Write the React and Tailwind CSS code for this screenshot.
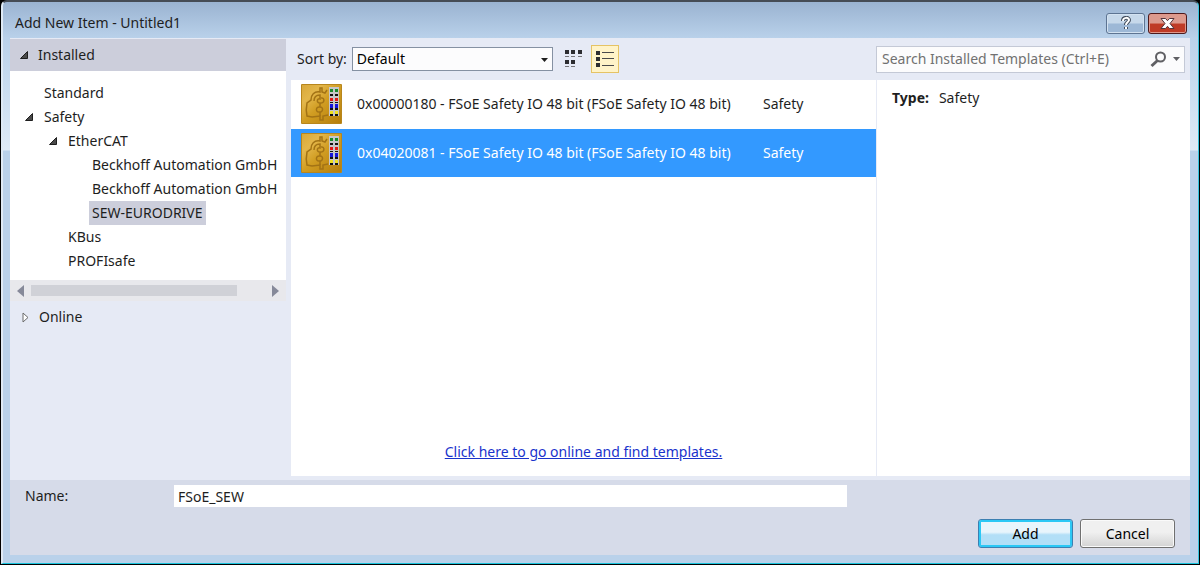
import { useState } from "react";

const tree = [
  { id: 1, name: "Standard", indent: "pl-[31px]" },
  { id: 2, name: "Safety", indent: "pl-[15px]", open: true },
  { id: 3, name: "EtherCAT", indent: "pl-[39px]", open: true },
  { id: 4, name: "Beckhoff Automation GmbH", indent: "pl-[79px]" },
  { id: 5, name: "Beckhoff Automation GmbH", indent: "pl-[79px]" },
  { id: 6, name: "SEW-EURODRIVE", indent: "pl-[79px]" },
  { id: 7, name: "KBus", indent: "pl-[55px]" },
  { id: 8, name: "PROFIsafe", indent: "pl-[55px]" },
];

const templates = [
  {
    id: "0x00000180",
    name: "0x00000180 - FSoE Safety IO 48 bit (FSoE Safety IO 48 bit)",
    type: "Safety",
  },
  {
    id: "0x04020081",
    name: "0x04020081 - FSoE Safety IO 48 bit (FSoE Safety IO 48 bit)",
    type: "Safety",
  },
];

const OpenArrow = () => (
  <svg width="9" height="9" viewBox="0 0 9 9" className="shrink-0">
    <path d="M7.5 .5v7h-7z" fill="#4a4a4a" stroke="#1e1e1e" />
  </svg>
);

const TemplateIcon = () => (
  <svg width="41" height="40" viewBox="0 0 41 40" className="shrink-0">
    <defs>
      <linearGradient id="gold" x1="0" y1="0" x2="1" y2="1">
        <stop offset="0" stopColor="#d9a93a" />
        <stop offset="0.25" stopColor="#e3b64a" />
        <stop offset="0.5" stopColor="#d19d22" />
        <stop offset="1" stopColor="#b57e0c" />
      </linearGradient>
    </defs>
    <rect width="41" height="40" rx="1" fill="#b8861c" />
    <rect x="1" y="1" width="39" height="38" fill="url(#gold)" />
    <g fill="none" stroke="#a37315" strokeWidth="1.5">
      <path d="M26 6l-2 3-3-1V4h-2v4c-6-1-9 3-9 8l-4 3c-1 5-1 9 0 13l5 1 8-1v4h3v-4l5-1" />
      <path d="M13 17c0-4 2-6 6-6v4c-3-1-4 4 0 4M19 19c5 1 5-6 1-5M19 19v4c-4-1-5 5-1 5 4 1 5-5 1-5M19 28v4" />
    </g>
    <rect x="28" y="3" width="10" height="29" fill="#c6c6ca" />
    <path d="M29 5h3v3h-3zM34 5h3v3h-3z" fill="#188a2c" />
    <path
      d="M29 10h3v2h-3zM34 10h3v2h-3zM29 18h3v1h-3zM34 18h3v1h-3zM29 24h3v2h-3zM34 24h3v2h-3zM29 30h3v2h-3zM34 30h3v2h-3z"
      fill="#111"
    />
    <path d="M29 14h3v3h-3zM34 14h3v3h-3z" fill="#e01818" />
    <path d="M29 20h3v4h-3zM34 20h3v4h-3z" fill="#1414dc" />
    <path d="M29 27h3v3h-3zM34 27h3v3h-3z" fill="#f0e020" />
  </svg>
);

const TitleBar = () => (
  <header className="flex h-[36px] items-center pr-[11px] pl-[12px]">
    <h1 className="flex-1 pt-[6px]">Add New Item - Untitled1</h1>
    <div className="flex gap-[3px] pt-[7px]">
      <button
        aria-label="Help"
        className="flex h-[21px] w-[39px] items-center justify-center rounded-[3px] border border-[#5d7492] bg-linear-to-b from-[#c6d8ea] from-45% to-[#9db8d6] to-55% shadow-[inset_0_0_0_1px_#d3e2f1]"
      >
        <svg width="12" height="15" viewBox="0 0 12 15" fill="none">
          <path
            d="M3 5c0-4 6-4 6-1 0 2-3 2-3 5M6 11v2"
            stroke="#3f4a5a"
            strokeWidth="4"
          />
          <path
            d="M3 5c0-4 6-4 6-1 0 2-3 2-3 5M6 11v2"
            stroke="#fff"
            strokeWidth="2"
          />
        </svg>
      </button>
      <button
        aria-label="Close"
        className="flex h-[21px] w-[39px] items-center justify-center rounded-[3px] border border-[#4d1a1c] bg-linear-to-b from-[#dc9a8e] from-45% to-[#bf3b26] to-55% shadow-[inset_0_0_0_1px_#e0978a]"
      >
        <svg width="15" height="13" viewBox="0 0 15 13">
          <path
            d="M1 1.5h4.5l2 2.200 2-2.200H14l-4 5 4 5H9.500l-2-2.200-2 2.200H1l4-5z"
            fill="#fff"
            stroke="#54343a"
          />
        </svg>
      </button>
    </div>
  </header>
);

const Sidebar = () => (
  <nav aria-label="Categories" className="w-[276px] shrink-0 pt-px">
    <button className="flex h-[32px] w-full items-center gap-[9px] bg-[#cccedb] pl-[10px]">
      <OpenArrow />
      Installed
    </button>
    <ul className="overflow-hidden bg-white pt-[10px] pb-[7px]">
      {tree.map((item) => (
        <li
          key={item.id}
          className={`flex h-[24px] items-center ${item.indent}`}
        >
          {item.open && <OpenArrow />}
          <button
            className={`h-full whitespace-nowrap ${
              item.open ? "pl-[10px]" : "px-[3px]"
            } ${item.name === "SEW-EURODRIVE" ? "bg-[#cccedb]" : ""}`}
          >
            {item.name}
          </button>
        </li>
      ))}
    </ul>
    <div className="flex h-[21px] items-center bg-[#e8e8ec] px-[7px]">
      <button aria-label="Scroll left">
        <svg width="7" height="12" viewBox="0 0 7 12">
          <path d="M7 0v12L0 6z" fill="#868999" />
        </svg>
      </button>
      <div className="mx-[7px] flex-1">
        <div className="h-[11px] w-[88%] bg-[#d0d1d7]" />
      </div>
      <button aria-label="Scroll right">
        <svg width="7" height="12" viewBox="0 0 7 12">
          <path d="M0 0v12l7-6z" fill="#868999" />
        </svg>
      </button>
    </div>
    <button className="flex h-[32px] w-full items-center gap-[10px] pl-[12px]">
      <svg width="7" height="11" viewBox="0 0 7 11">
        <path d="M1 1v9l5-4.5z" fill="#fff" stroke="#6a6a6a" />
      </svg>
      Online
    </button>
  </nav>
);

const App = () => {
  const [selected, setSelected] = useState("0x04020081");
  const [name, setName] = useState("FSoE_SEW");

  return (
    <div className="flex min-h-screen bg-black pr-px pb-px pl-px font-['Noto_Sans','Open_Sans',sans-serif] text-[14px] leading-[20px] text-[#1e1e1e]">
      <div className="flex flex-1 flex-col rounded-t-[6px] border-t-2 border-r border-b border-l-2 border-t-[#454c55] border-r-[#35c4de] border-b-[#18c4dc] border-l-[#dfeaf5] bg-[linear-gradient(to_bottom,#9ab3d1_0,#b9d1ea_36px,#dfebf7_148px,#b9d1ea_149px)]">
        <TitleBar />

        <main className="mr-[8px] mb-[8px] ml-[7px] flex flex-1 flex-col bg-[#e6eaf5]">
          <div className="flex flex-1 gap-[5px]">
            <Sidebar />

            <div className="flex min-w-0 flex-1 flex-col">
              <div className="flex h-[42px] items-center pr-[5px]">
                <div className="flex min-w-0 flex-1 items-center pl-[6px]">
                  <label htmlFor="sort">Sort by:</label>
                  <div className="relative ml-[5px] w-[201px]">
                    <select
                      id="sort"
                      className="h-[24px] w-full appearance-none border border-[#8591a2] bg-[#fcfcfd] px-[4px] text-black"
                    >
                      <option>Default</option>
                    </select>
                    <svg
                      width="7"
                      height="4"
                      viewBox="0 0 7 4"
                      className="pointer-events-none absolute top-[11px] right-[5px]"
                    >
                      <path d="M0 0h7L3.5 4z" fill="#1e1e1e" />
                    </svg>
                  </div>
                  <button
                    aria-label="Small icons"
                    className="ml-[7px] flex size-[28px] items-center justify-center"
                  >
                    <svg
                      width="17"
                      height="18"
                      viewBox="0 0 17 18"
                      fill="#2d2d30"
                    >
                      <path d="M0 0h4v4H0zM6 0h4v4H6zM13 0h4v4h-4zM0 10h4v4H0zM6 10h4v4H6z" />
                      <path
                        d="M0 6h4v1H0zM6 6h4v1H6zM13 6h4v1h-4zM0 16h4v1H0zM6 16h4v1H6z"
                        fill="#77777a"
                      />
                    </svg>
                  </button>
                  <button
                    aria-label="Medium icons"
                    className="ml-[3px] flex size-[28px] items-center justify-center border border-[#e5c365] bg-[#fff3c8]"
                  >
                    <svg
                      width="18"
                      height="18"
                      viewBox="0 0 18 18"
                      fill="#2d2d30"
                    >
                      <path d="M0 1h4v4H0zM0 7h4v4H0zM0 13h4v4H0z" />
                      <path
                        d="M6 2h12v1H6zM6 8h12v1H6zM6 15h12v1H6z"
                        fill="#4a4a4c"
                      />
                    </svg>
                  </button>
                </div>
                <div className="flex h-[27px] w-[309px] items-center border border-[#c4c9d6] bg-[#fcfcfd] pr-[4px]">
                  <input
                    type="search"
                    aria-label="Search Installed Templates"
                    placeholder="Search Installed Templates (Ctrl+E)"
                    className="min-w-0 flex-1 pl-[5px] outline-none placeholder:text-[#717171]"
                  />
                  <button aria-label="Search">
                    <svg
                      width="17"
                      height="17"
                      viewBox="0 0 17 17"
                      fill="none"
                      stroke="#606064"
                    >
                      <circle cx="10.5" cy="6" r="4.5" strokeWidth="2" />
                      <path d="M7.5 9.5L1.5 15" strokeWidth="3" />
                    </svg>
                  </button>
                  <button aria-label="Search options" className="ml-[6px]">
                    <svg width="7" height="4" viewBox="0 0 7 4">
                      <path d="M0 0h7L3.5 4z" fill="#606064" />
                    </svg>
                  </button>
                </div>
              </div>

              <div className="flex flex-1">
                <section className="flex min-w-0 flex-1 flex-col bg-white">
                  <ul className="flex flex-1 flex-col gap-px">
                    {templates.map((item) => (
                      <li key={item.id}>
                        <button
                          onClick={() => setSelected(item.id)}
                          className={`flex h-[48px] w-full items-center pl-[10px] text-left ${
                            selected === item.id
                              ? "bg-[#3399ff] text-white"
                              : ""
                          }`}
                        >
                          <TemplateIcon />
                          <span className="ml-[15px] w-[406px] whitespace-nowrap">
                            {item.name}
                          </span>
                          <span>{item.type}</span>
                        </button>
                      </li>
                    ))}
                  </ul>
                  <p className="pb-[14px] text-center">
                    <a href="#online" className="text-[#1a33cc] underline">
                      Click here to go online and find templates.
                    </a>
                  </p>
                </section>
                <aside className="w-[314px] shrink-0 border-l border-[#e6eaf5] bg-white pt-[8px] pl-[15px]">
                  <b className="mr-[10px]">Type:</b>
                  Safety
                </aside>
              </div>
            </div>
          </div>

          <footer className="mt-[4px] bg-[#d6dbe9] pt-[5px] pr-[15px] pb-[7px] pl-[15px]">
            <div className="flex items-center">
              <label htmlFor="name" className="w-[149px]">
                Name:
              </label>
              <input
                id="name"
                value={name}
                onChange={(e) => setName(e.target.value)}
                className="mr-[328px] h-[22px] min-w-0 flex-1 bg-white px-[4px] outline-none"
              />
            </div>
            <div className="mt-[12px] flex justify-end gap-[7px]">
              <button className="h-[29px] w-[95px] rounded-[3px] border border-[#3c7fb1] bg-linear-to-b from-[#e8f5fc] from-45% to-[#b2dff7] to-55% text-black shadow-[inset_0_0_0_2px_#2bc8f5]">
                Add
              </button>
              <button className="h-[29px] w-[95px] rounded-[3px] border border-[#707070] bg-linear-to-b from-[#f0f0f0] from-45% to-[#d3d3d3] text-black shadow-[inset_0_0_0_1px_#fafafa]">
                Cancel
              </button>
            </div>
          </footer>
        </main>
      </div>
    </div>
  );
};

export default App;
